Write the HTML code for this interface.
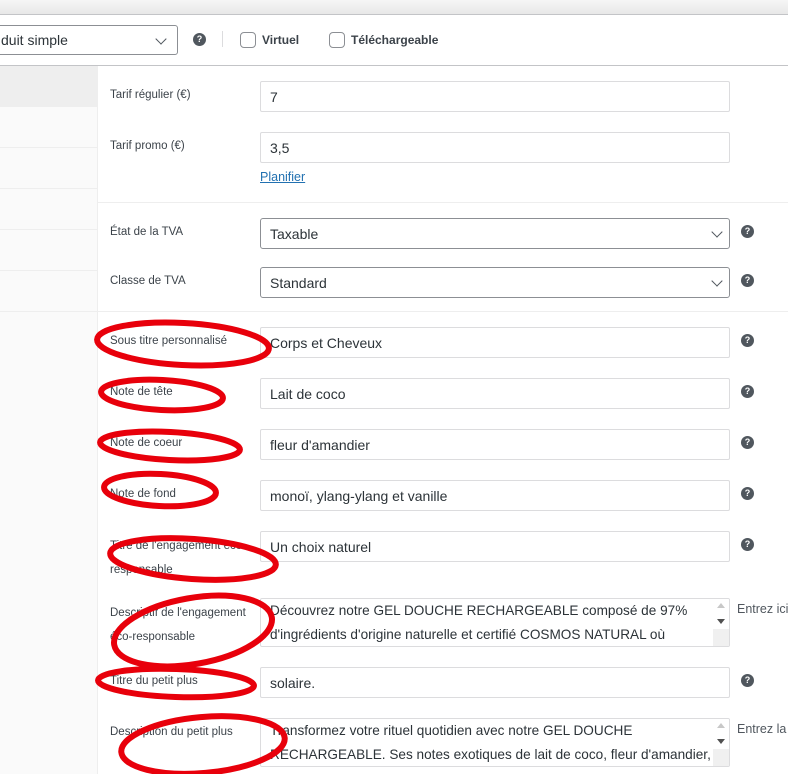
<!DOCTYPE html>
<html><head><meta charset="utf-8"><style>
*{box-sizing:border-box;margin:0;padding:0}
body{width:788px;height:774px;overflow:hidden;background:#fff;font-family:"Liberation Sans",sans-serif;position:relative;color:#2c3338}
.abs{position:absolute}
.lbl{position:absolute;left:110px;font-size:11.5px;color:#3c434a;line-height:22px;width:150px}
.inp{position:absolute;left:260px;width:470px;height:31px;border:1px solid #dcdcde;border-radius:2px;font-size:14px;color:#2c3338;padding:0 9px;line-height:30px;background:#fff;white-space:nowrap;overflow:hidden}
.sel{border-color:#8c8f94;border-radius:3px}
.chev{position:absolute;right:8px;top:9px;width:8px;height:8px;border-right:1.6px solid #50575e;border-bottom:1.6px solid #50575e;transform:rotate(45deg)}
.help{position:absolute;left:741px;width:13px;height:13px;border-radius:50%;background:#50575e;color:#fff;font-size:9px;font-weight:bold;text-align:center;line-height:13px}
.ta{position:absolute;left:260px;width:470px;height:49px;border:1px solid #dcdcde;border-radius:2px;font-size:13.6px;line-height:24px;padding:0 18px 0 9px;overflow:hidden}
.sb{position:absolute;right:0;top:0;width:16px;height:100%;background:#f0f0f0}
.sb:before{content:"";position:absolute;top:0;left:0;width:16px;height:30px;background:#fff}
.up{position:absolute;right:4px;top:4px;width:0;height:0;border-left:4px solid transparent;border-right:4px solid transparent;border-bottom:5px solid #c8c8c8}
.dn{position:absolute;right:4px;top:20px;width:0;height:0;border-left:4px solid transparent;border-right:4px solid transparent;border-top:5px solid #505050}
.hr{position:absolute;left:98px;right:0;height:1px;background:#eee}
</style></head><body>
<div class="abs" style="left:0;top:0;width:788px;height:14px;background:linear-gradient(#f6f6f6,#e8e8e8)"></div>
<div class="abs" style="left:0;top:14px;width:788px;height:1px;background:#c3c4c7"></div>
<div class="abs" style="left:0;top:65px;width:788px;height:1px;background:#c3c4c7"></div>
<!-- toolbar -->
<div class="abs" style="left:-8px;top:25px;width:186px;height:30px;border:1px solid #8c8f94;border-radius:3px;font-size:14px;line-height:29px;padding-left:8px">duit simple<span class="chev" style="right:12px"></span></div>
<div class="help" style="left:193px;top:33px">?</div>
<div class="abs" style="left:222px;top:31px;width:1px;height:16px;background:#dcdcde"></div>
<div class="abs" style="left:240px;top:32px;width:16px;height:16px;border:1px solid #8c8f94;border-radius:4px"></div>
<div class="abs" style="left:262px;top:33px;font-size:12px;font-weight:bold;color:#3c434a">Virtuel</div>
<div class="abs" style="left:329px;top:32px;width:16px;height:16px;border:1px solid #8c8f94;border-radius:4px"></div>
<div class="abs" style="left:351px;top:33px;font-size:12px;font-weight:bold;color:#3c434a">Téléchargeable</div>
<!-- sidebar -->
<div class="abs" style="left:0;top:66px;width:97px;height:708px;background:#fafafa"></div>
<div class="abs" style="left:0;top:66px;width:97px;height:41px;background:#eee"></div>
<div class="abs" style="left:97px;top:66px;width:1px;height:708px;background:#eee"></div>
<div class="abs" style="left:0;top:147px;width:97px;height:1px;background:#eee"></div>
<div class="abs" style="left:0;top:188px;width:97px;height:1px;background:#eee"></div>
<div class="abs" style="left:0;top:229px;width:97px;height:1px;background:#eee"></div>
<div class="abs" style="left:0;top:270px;width:97px;height:1px;background:#eee"></div>
<div class="abs" style="left:0;top:311px;width:97px;height:1px;background:#eee"></div>
<!-- fields -->
<div class="lbl" style="top:84px">Tarif régulier (€)</div>
<div class="inp" style="top:81px">7</div>
<div class="lbl" style="top:135px">Tarif promo (€)</div>
<div class="inp" style="top:132px">3,5</div>
<div class="abs" style="left:260px;top:170px;font-size:12.5px;color:#2271b1;text-decoration:underline">Planifier</div>
<div class="hr" style="top:202px"></div>
<div class="lbl" style="top:221px">État de la TVA</div>
<div class="inp sel" style="top:218px">Taxable<span class="chev"></span></div>
<div class="help" style="top:225px">?</div>
<div class="lbl" style="top:270px">Classe de TVA</div>
<div class="inp sel" style="top:267px">Standard<span class="chev"></span></div>
<div class="help" style="top:274px">?</div>
<div class="hr" style="top:311px"></div>

<div class="lbl" style="top:330px">Sous titre personnalisé</div>
<div class="inp" style="top:327px">Corps et Cheveux</div>
<div class="help" style="top:334px">?</div>
<div class="lbl" style="top:381px">Note de tête</div>
<div class="inp" style="top:378px">Lait de coco</div>
<div class="help" style="top:385px">?</div>
<div class="lbl" style="top:432px">Note de coeur</div>
<div class="inp" style="top:429px">fleur d'amandier</div>
<div class="help" style="top:436px">?</div>
<div class="lbl" style="top:483px">Note de fond</div>
<div class="inp" style="top:480px">monoï, ylang-ylang et vanille</div>
<div class="help" style="top:487px">?</div>
<div class="lbl" style="top:534px;line-height:24px">Titre de l'engagement éco-responsable</div>
<div class="inp" style="top:531px">Un choix naturel</div>
<div class="help" style="top:538px">?</div>
<div class="lbl" style="top:601px;line-height:24px">Descriptif de l'engagement éco-responsable</div>
<div class="ta" style="top:598px">Découvrez notre GEL DOUCHE RECHARGEABLE composé de 97% d'ingrédients d'origine naturelle et certifié COSMOS NATURAL où<div class="sb"><span class="up"></span><span class="dn"></span></div></div>
<div class="abs" style="left:737px;top:602px;font-size:12.5px;color:#50575e;white-space:nowrap">Entrez ici</div>
<div class="lbl" style="top:670px">Titre du petit plus</div>
<div class="inp" style="top:667px">solaire.</div>
<div class="help" style="top:674px">?</div>
<div class="lbl" style="top:721px">Description du petit plus</div>
<div class="ta" style="top:718px">Transformez votre rituel quotidien avec notre GEL DOUCHE RECHARGEABLE. Ses notes exotiques de lait de coco, fleur d'amandier,<div class="sb"><span class="up"></span><span class="dn"></span></div></div>
<div class="abs" style="left:737px;top:722px;font-size:12.5px;color:#50575e;white-space:nowrap">Entrez la</div>

<svg class="abs" style="left:0;top:0" width="788" height="774" fill="none" stroke="#e8000b" stroke-width="6">
<ellipse cx="183" cy="344" rx="86" ry="21" transform="rotate(3 183 344)"/>
<ellipse cx="162" cy="395" rx="61" ry="15" transform="rotate(3 162 395)"/>
<ellipse cx="170" cy="446" rx="70" ry="14" transform="rotate(3 170 446)"/>
<ellipse cx="160" cy="490" rx="56" ry="16" transform="rotate(3 160 490)"/>
<ellipse cx="193" cy="559" rx="83" ry="20" transform="rotate(4 193 559)"/>
<ellipse cx="193" cy="631" rx="80" ry="33" transform="rotate(-10 193 631)"/>
<ellipse cx="176" cy="683" rx="78" ry="14" transform="rotate(2 176 683)"/>
<ellipse cx="203" cy="745" rx="82" ry="28" transform="rotate(-5 203 745)"/>
</svg>
</body></html>
